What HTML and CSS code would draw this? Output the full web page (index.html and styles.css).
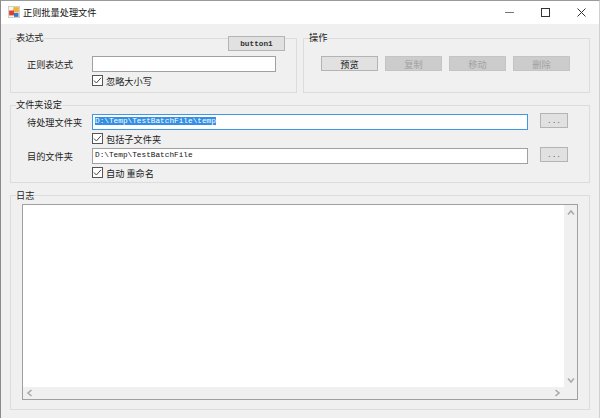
FILE: index.html
```html
<!DOCTYPE html>
<html lang="zh">
<head>
<meta charset="utf-8">
<title>正则批量处理文件</title>
<link rel="stylesheet" href="styles.css">
</head>
<body>
<div class="window">
  <header class="titlebar">
    <svg class="app-icon" width="16" height="16" viewBox="0 0 16 16">
      <rect x="0.5" y="0.5" width="15" height="15" fill="#f4f4f0" stroke="#c4c4be"/>
      <rect x="7" y="1.5" width="7.5" height="6.5" fill="#f2b233"/>
      <rect x="1.5" y="6" width="6.5" height="6.5" fill="#d8402f"/>
      <rect x="8" y="9" width="6" height="5.5" fill="#3f78c9"/>
    </svg>
    <span class="title">正则批量处理文件</span>
    <div class="caption">
      <span class="cap-btn"><svg width="9" height="9" viewBox="0 0 9 9"><path d="M0 4.5H9" stroke="#777" fill="none"/></svg></span>
      <span class="cap-btn"><svg width="9" height="9" viewBox="0 0 9 9"><rect x="0.5" y="0.5" width="8" height="8" stroke="#333" fill="none"/></svg></span>
      <span class="cap-btn"><svg width="9" height="9" viewBox="0 0 9 9"><path d="M0.5 0.5L8.5 8.5M8.5 0.5L0.5 8.5" stroke="#333" fill="none"/></svg></span>
    </div>
  </header>
  <main class="client">
    <div class="top-row">
      <fieldset class="group group-expr">
        <legend>表达式</legend>
        <button class="btn btn-mono btn-float" type="button">button1</button>
        <div class="row">
          <label class="field-label">正则表达式</label>
          <div class="text-box"></div>
        </div>
        <label class="check"><svg class="tick" width="11" height="11" viewBox="0 0 11 11"><rect x="0.5" y="0.5" width="10" height="10" fill="#fff" stroke="#555"/><path d="M2 5.5L4.4 8L9 2.8" stroke="#444" fill="none"/></svg>忽略大小写</label>
      </fieldset>
      <fieldset class="group group-ops">
        <legend>操作</legend>
        <div class="ops">
          <button class="btn" type="button">预览</button>
          <button class="btn btn-off" type="button">复制</button>
          <button class="btn btn-off" type="button">移动</button>
          <button class="btn btn-off" type="button">删除</button>
        </div>
      </fieldset>
    </div>
    <fieldset class="group group-folder">
      <legend>文件夹设定</legend>
      <div class="row">
        <label class="field-label">待处理文件夹</label>
        <div class="text-box text-box-wide text-box-focus"><span class="selected">D:\Temp\TestBatchFile\temp</span></div>
        <button class="btn btn-mono btn-browse" type="button">...</button>
      </div>
      <label class="check"><svg class="tick" width="11" height="11" viewBox="0 0 11 11"><rect x="0.5" y="0.5" width="10" height="10" fill="#fff" stroke="#555"/><path d="M2 5.5L4.4 8L9 2.8" stroke="#444" fill="none"/></svg>包括子文件夹</label>
      <div class="row row-next">
        <label class="field-label">目的文件夹</label>
        <div class="text-box text-box-wide">D:\Temp\TestBatchFile</div>
        <button class="btn btn-mono btn-browse" type="button">...</button>
      </div>
      <label class="check"><svg class="tick" width="11" height="11" viewBox="0 0 11 11"><rect x="0.5" y="0.5" width="10" height="10" fill="#fff" stroke="#555"/><path d="M2 5.5L4.4 8L9 2.8" stroke="#444" fill="none"/></svg>自动 重命名</label>
    </fieldset>
    <fieldset class="group group-log">
      <legend>日志</legend>
      <div class="log">
        <div class="log-main">
          <div class="log-text"></div>
          <div class="hscroll">
            <svg width="8" height="8" viewBox="0 0 8 8"><path d="M5.5 1L2 4L5.5 7" stroke="#aaa" stroke-width="1.6" fill="none"/></svg>
            <svg width="8" height="8" viewBox="0 0 8 8"><path d="M2.5 1L6 4L2.5 7" stroke="#aaa" stroke-width="1.6" fill="none"/></svg>
          </div>
        </div>
        <div class="vscroll">
          <svg width="8" height="8" viewBox="0 0 8 8"><path d="M1 5.5L4 2L7 5.5" stroke="#aaa" stroke-width="1.6" fill="none"/></svg>
          <svg width="8" height="8" viewBox="0 0 8 8"><path d="M1 2.5L4 6L7 2.5" stroke="#aaa" stroke-width="1.6" fill="none"/></svg>
        </div>
      </div>
    </fieldset>
  </main>
</div>
</body>
</html>
```
FILE: styles.css
```css
* { box-sizing: border-box; }
html, body { margin: 0; padding: 0; }
body {
  width: 600px;
  height: 418px;
  overflow: hidden;
  font-family: "Noto Sans CJK SC", "Noto Sans", sans-serif;
  font-size: 9px;
  color: #1c1c1c;
  background: #f0f0f0;
}
.window {
  width: 600px;
  height: 418px;
  display: flex;
  flex-direction: column;
  border-left: 1px solid #8c8c8c;
  border-top: 1px solid #9a9a9a;
  border-right: 1px solid #d0d0d0;
}
.titlebar {
  flex: none;
  height: 23px;
  display: flex;
  align-items: center;
  background: #fff;
  padding: 0 0 1px 7px;
}
.app-icon { width: 12px; height: 12px; flex: none; }
.title { margin-left: 3px; font-size: 9.2px; color: #111; }
.caption { margin-left: auto; display: flex; }
.cap-btn {
  width: 36px;
  height: 22px;
  display: flex;
  align-items: center;
  justify-content: center;
}
.client {
  flex: 1;
  min-height: 0;
  padding: 8px 9px 8px 9px;
  display: flex;
  flex-direction: column;
  background: #f0f0f0;
}
.top-row { display: flex; gap: 6px; }
.group {
  margin: 0;
  min-width: 0;
  border: 1px solid #dcdcdc;
  padding: 0;
  position: relative;
}
legend {
  margin-left: 5px;
  padding: 0;
  font-size: 9.2px;
  line-height: 11px;
  height: 13px;
}
.group-log legend { margin-left: -6px; line-height: 13px; }
.group-expr, .group-ops { width: 287px; height: 61px; }
.group-expr { padding-top: 11px; }
.group-folder { height: 84px; margin-top: 6px; padding-top: 2px; }
.group-log { flex: 1; min-height: 0; margin-top: 6px; padding: 2px 11px 9px 11px; display: flex; }
.row { display: flex; align-items: center; }
.row-next { margin-top: 3px; }
.field-label { width: 81px; padding-left: 16px; flex: none; font-size: 9.2px; white-space: nowrap; }
.text-box {
  width: 184px;
  height: 16px;
  background: #fff;
  border: 1px solid #a0a0a0;
  font-family: "Liberation Mono", monospace;
  font-size: 7.75px;
  line-height: 13px;
  padding-left: 2px;
  color: #111;
  white-space: nowrap;
}
.text-box-wide { width: 436px; }
.text-box-focus { border-color: #3f97e6; }
.selected { background: #3390e4; color: #fff; }
.btn {
  height: 15px;
  padding: 0;
  border: 1px solid #b4b4b4;
  background: #e1e1e1;
  font-family: "Noto Sans CJK SC", sans-serif;
  font-size: 9.2px;
  line-height: 12px;
  color: #222;
}
.btn-off { background: #cccccc; border-color: #c4c4c4; color: #a2a2a2; }
.btn-mono { font-family: "Liberation Mono", monospace; font-size: 7.75px; font-weight: 700; color: #333; }
.btn-float { position: absolute; top: -9px; left: 217px; width: 57px; }
.btn-browse { width: 28px; margin: -1px 0 0 12px; align-self: flex-start; color: #666; font-weight: 400; }
.check {
  display: flex;
  align-items: center;
  gap: 3px;
  margin: 2px 0 0 81px;
  height: 13px;
  font-size: 9.2px;
}
.tick { width: 11px; height: 11px; flex: none; }
.ops { display: flex; gap: 7px; padding: 11px 0 0 17px; }
.ops .btn { width: 57px; }
.log {
  flex: 1;
  min-height: 0;
  display: flex;
  border: 1px solid #a0a0a0;
  background: #f0f0f0;
}
.log-main { flex: 1; display: flex; flex-direction: column; min-width: 0; }
.log-text { flex: 1; background: #fff; }
.hscroll {
  height: 12px;
  display: flex;
  align-items: center;
  justify-content: space-between;
  padding: 0 3px;
}
.vscroll {
  width: 13px;
  display: flex;
  flex-direction: column;
  justify-content: space-between;
  align-items: center;
  padding: 4px 0 15px;
}
```
